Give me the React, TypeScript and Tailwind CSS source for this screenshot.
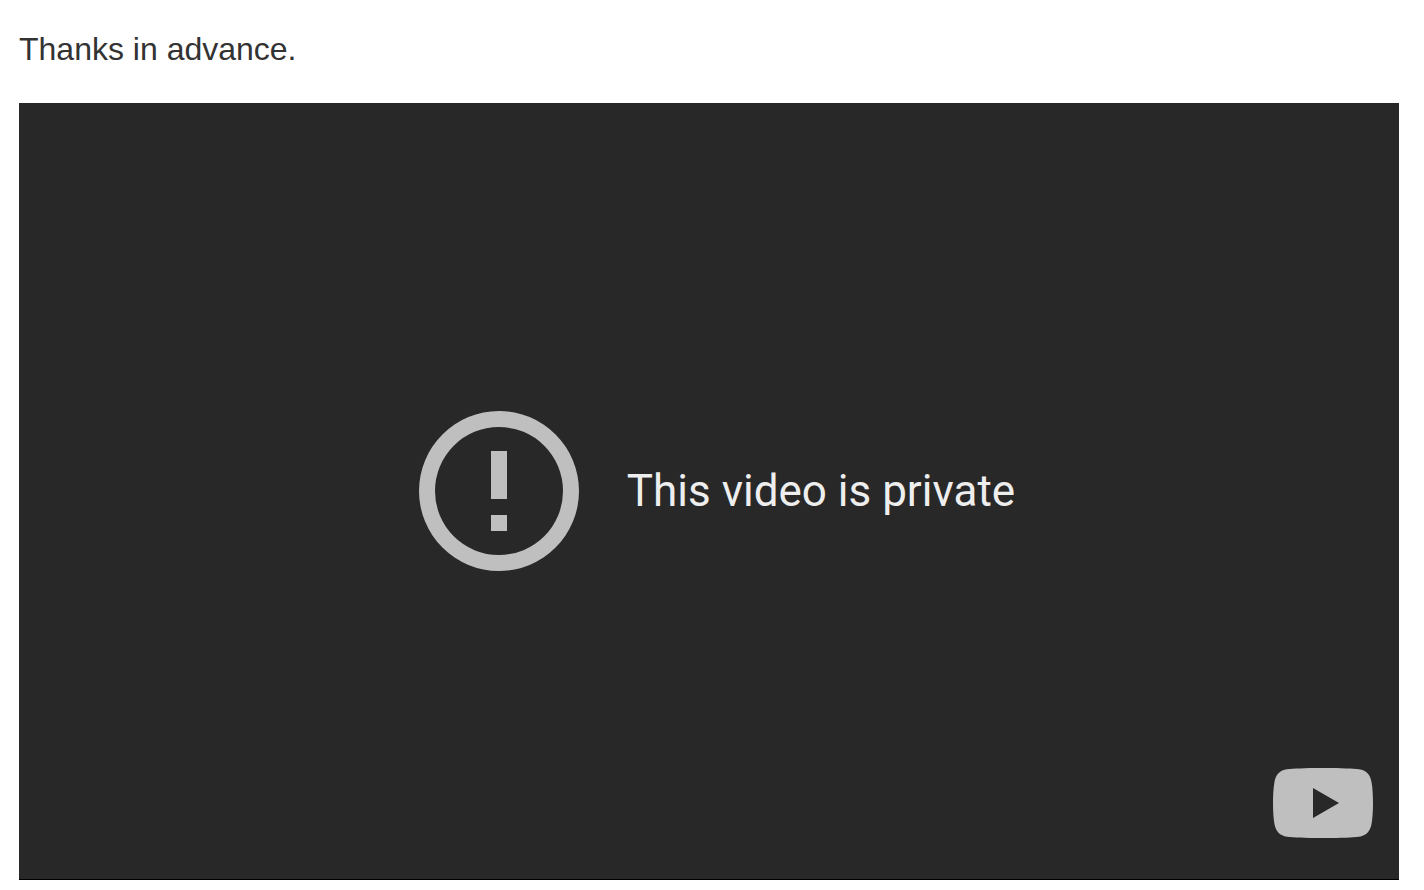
import type { ReactNode } from "react"

interface VideoFrameProps {
  href: string
  children: ReactNode
}

function ErrorIcon() {
  return (
    <svg className="h-40 w-40 shrink-0 fill-[#bfbfbf]" viewBox="0 0 20 20" aria-hidden="true">
      <path d="M10 0a10 10 0 1 0 0 20 10 10 0 0 0 0-20zm0 18a8 8 0 1 1 0-16 8 8 0 0 1 0 16zM9 5h2v6H9zM9 13h2v2H9z" />
    </svg>
  )
}

function PlayLogo() {
  return (
    <svg className="h-[70px] w-[100px]" viewBox="0 0 100 70" aria-hidden="true">
      <path
        className="fill-[#bfbfbf]"
        fillRule="evenodd"
        d="M50 0C70 0 79 .6 86 1.300C93 2.200 97.500 6.500 98.700 15C99.500 20 100 27 100 35C100 43 99.500 50 98.700 55C97.500 63.500 93 67.800 86 68.700C79 69.400 70 70 50 70C30 70 21 69.400 14 68.700C7 67.800 2.500 63.500 1.300 55C.5 50 0 43 0 35C0 27 .5 20 1.300 15C2.500 6.500 7 2.200 14 1.300C21 .6 30 0 50 0ZM40 20V50L66 35Z"
      />
    </svg>
  )
}

function VideoFrame({ href, children }: VideoFrameProps) {
  return (
    <section className="grid aspect-[1380/777] border-b border-black bg-[#282828]">
      <div className="col-start-1 row-start-1 flex items-center justify-center gap-12 pl-4">
        <ErrorIcon />
        <p className="font-[Roboto,sans-serif] text-[44px] leading-[52px] text-[#eeeeee]">{children}</p>
      </div>
      <a
        href={href}
        aria-label="Watch on YouTube"
        className="col-start-1 row-start-1 mr-[26px] mb-[41px] self-end justify-self-end"
      >
        <PlayLogo />
      </a>
    </section>
  )
}

export default function App() {
  return (
    <main className="bg-white pt-7 pr-[25px] pb-[10px] pl-[19px]">
      <p className="mb-[33px] font-['Liberation_Sans',Arial,sans-serif] text-[32px] leading-[42px] text-[#333333]">
        Thanks in advance.
      </p>
      <VideoFrame href="https://www.youtube.com">This video is private</VideoFrame>
    </main>
  )
}
